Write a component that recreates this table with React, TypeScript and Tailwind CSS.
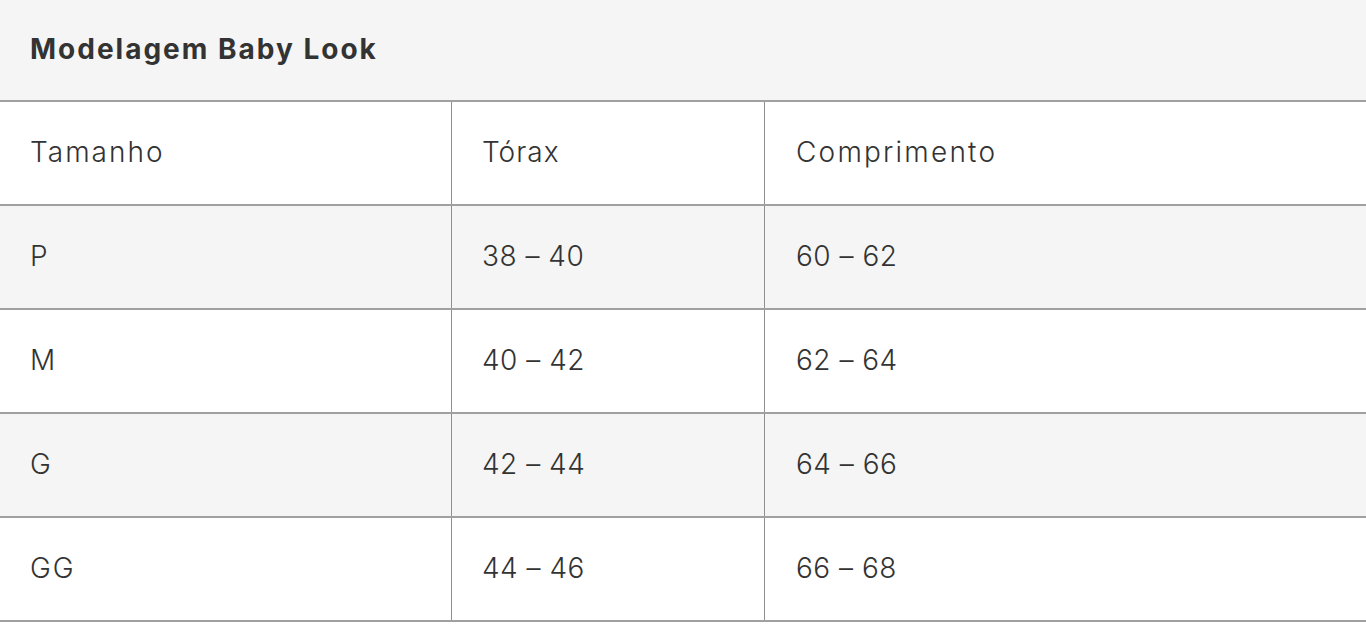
import React from 'react';

const rows = [
  { size: 'P', torax: '38 – 40', comp: '60 – 62' },
  { size: 'M', torax: '40 – 42', comp: '62 – 64' },
  { size: 'G', torax: '42 – 44', comp: '64 – 66' },
  { size: 'GG', torax: '44 – 46', comp: '66 – 68' },
];

const Row: React.FC<{ cells: string[]; shaded: boolean; numeric?: boolean }> = ({ cells, shaded, numeric }) => (
  <div
    className={`grid grid-cols-[452px_313px_1fr] h-[104px] border-b-2 border-[#a0a0a0] ${
      shaded ? 'bg-[#f5f5f5]' : 'bg-white'
    }`}
  >
    <div className="flex items-center pl-[30px] pb-[3px] border-r border-[#8f8f8f] tracking-[2px]">{cells[0]}</div>
    <div className={`flex items-center pl-[30px] pb-[3px] border-r border-[#8f8f8f] ${numeric ? 'tracking-[0.5px]' : 'tracking-[1px]'}`}>
      {cells[1]}
    </div>
    <div className={`flex items-center pl-[31px] pb-[3px] ${numeric ? 'tracking-[0.5px]' : 'tracking-[2.2px]'}`}>{cells[2]}</div>
  </div>
);

export default function App() {
  return (
    <div
      className="w-full min-h-screen bg-white text-[#333] text-[28px] font-light"
      style={{ fontFamily: 'Inter, "Noto Sans", sans-serif' }}
    >
      {/* title */}
      <div className="h-[102px] flex items-center pl-[30px] bg-[#f5f5f5] border-b-2 border-[#a0a0a0]">
        <h2 className="font-bold text-[28px] tracking-[2px] pb-[2px]">Modelagem Baby Look</h2>
      </div>

      <Row cells={['Tamanho', 'Tórax', 'Comprimento']} shaded={false} />
      {rows.map((r, i) => (
        <Row key={r.size} cells={[r.size, r.torax, r.comp]} shaded={i % 2 === 0} numeric />
      ))}
    </div>
  );
}
